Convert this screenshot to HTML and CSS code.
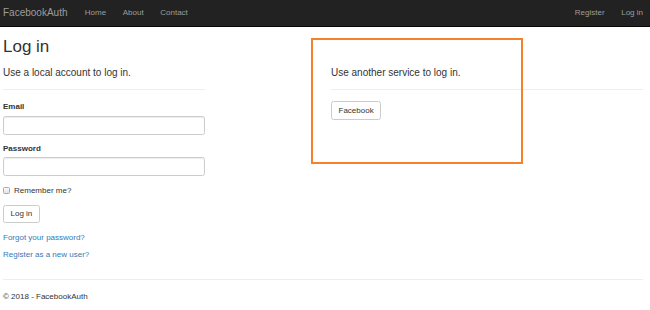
FILE: index.html
```html
<!DOCTYPE html>
<html lang="en">
<head>
  <meta charset="utf-8" />
  <meta name="viewport" content="width=device-width, initial-scale=1.0" />
  <title>Log in - FacebookAuth</title>
  <link rel="stylesheet" href="styles.css">
</head>
<body>

  <nav class="navbar">
    <div class="navbar-inner">
      <a class="brand" href="#">FacebookAuth</a>
      <ul class="nav">
        <li><a href="#">Home</a></li>
        <li><a href="#">About</a></li>
        <li><a href="#">Contact</a></li>
      </ul>
      <ul class="nav nav-right">
        <li><a href="#">Register</a></li>
        <li><a href="#">Log in</a></li>
      </ul>
    </div>
  </nav>

  <div class="body-content">
    <h2>Log in</h2>
    <div class="row">
      <section class="col-local">
        <form method="post" autocomplete="off">
          <h4>Use a local account to log in.</h4>
          <hr />
          <div class="form-group">
            <label for="email">Email</label>
            <input type="email" id="email" class="form-control">
          </div>
          <div class="form-group">
            <label for="password">Password</label>
            <input type="password" id="password" class="form-control">
          </div>
          <div class="form-group">
            <label class="checkbox">
              <input type="checkbox" id="remember"> Remember me?
            </label>
          </div>
          <div class="form-group">
            <button type="submit" class="btn">Log in</button>
          </div>
          <p><a href="#">Forgot your password?</a></p>
          <p><a href="#">Register as a new user?</a></p>
        </form>
      </section>

      <section class="col-external">
        <h4>Use another service to log in.</h4>
        <hr />
        <button type="button" class="btn">Facebook</button>
      </section>
    </div>

    <hr class="footer-rule" />
    <footer>
      <p>&copy; 2018 - FacebookAuth</p>
    </footer>
  </div>

  <div class="highlight"></div>

</body>
</html>
```

FILE: styles.css
```css
* { box-sizing: border-box; margin: 0; padding: 0; }
html, body {
  width: 100%; height: 100%;
  background: #fff;
}
body {
  position: relative;
  font-family: "Liberation Sans", Arial, sans-serif;
  font-size: 8px;
  line-height: 11.4px;
  color: #333;
  overflow: hidden;
}
a { color: #337ab7; text-decoration: none; }

/* navbar */
.navbar {
  background: #222;
  border-bottom: 1px solid #080808;
  height: 27px;
}
.navbar-inner {
  display: flex;
  align-items: center;
  height: 26px;
  padding: 0 7px 0 3px;
}
.brand {
  font-size: 10px;
  color: #9d9d9d;
  line-height: 26px;
  padding-right: 9px;
}
.nav {
  display: flex;
  list-style: none;
}
.nav a {
  display: block;
  color: #9d9d9d;
  line-height: 26px;
  padding: 0 8.3px;
}
.nav-right { margin-left: auto; margin-right: -8.3px; }

/* content */
.body-content {
  padding: 0 7px 0 3px;
}
h2 {
  font-size: 17px;
  font-weight: normal;
  line-height: 19px;
  margin-top: 10px;
}
.row {
  display: grid;
  grid-template-columns: 202px 1fr 312px;
}
.col-local { grid-column: 1; }
.col-external { grid-column: 3; }
h4 {
  font-size: 10px;
  font-weight: normal;
  line-height: 11px;
  margin-top: 10.6px;
}
hr {
  border: 0;
  border-top: 1px solid #eee;
  margin: 11.4px 0;
}
.form-group { margin-bottom: 8.5px; }
.form-group label {
  display: block;
  font-weight: bold;
  margin-bottom: 2.8px;
}
.form-control {
  display: block;
  width: 100%;
  height: 19px;
  border: 1px solid #ccc;
  border-radius: 2.5px;
  box-shadow: inset 0 1px 1px rgba(0,0,0,0.075);
  font-family: inherit;
  font-size: 8px;
  padding: 3px 7px;
}
.form-group .checkbox {
  display: flex;
  align-items: center;
  font-weight: normal;
  margin: 0;
  padding-top: 0;
  line-height: 11.4px;
}
.checkbox input {
  appearance: none;
  width: 7px;
  height: 7px;
  border: 1px solid #a9a9a9;
  border-radius: 1.5px;
  background: linear-gradient(#fafafa, #e3e3e3);
  margin: 0 4px 0 0;
}
.btn {
  display: inline-block;
  height: 18.5px;
  padding: 0 6.5px;
  font-family: inherit;
  font-size: 8px;
  color: #333;
  background: #fff;
  border: 1px solid #ccc;
  border-radius: 2.5px;
  cursor: pointer;
}
p { margin-bottom: 5.7px; }
.footer-rule { margin: 13px 0 11.4px; }
footer p { margin: 0; }

/* annotation frame */
.highlight {
  position: absolute;
  left: 311px;
  top: 38px;
  width: 212px;
  height: 126px;
  border: 2px solid #f5822a;
  pointer-events: none;
}
```
